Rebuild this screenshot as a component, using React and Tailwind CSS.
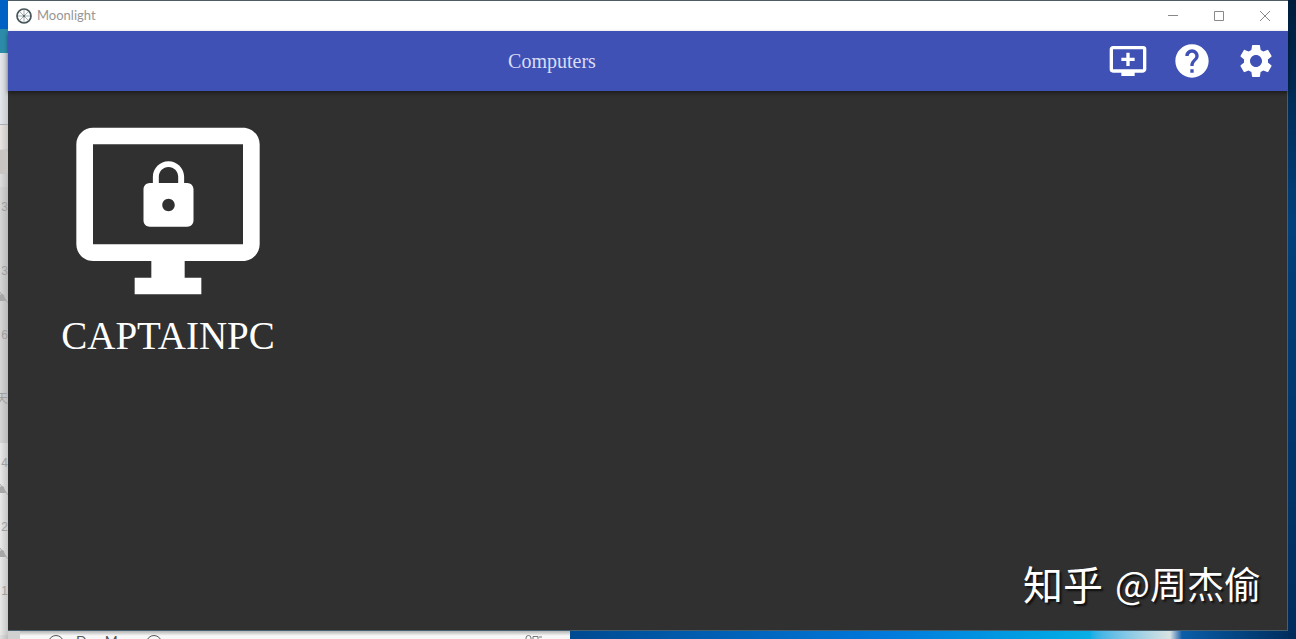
import clsx from 'clsx';
import { MdAddToQueue, MdHelp, MdLock, MdSettings } from 'react-icons/md';

const chatRows = [
  { id: 1, label: '3' },
  { id: 2, label: '3', muted: true },
  { id: 3, label: '6' },
  { id: 4, label: '天' },
  { id: 5, label: '4', muted: true, light: true },
  { id: 6, label: '2', muted: true, light: true },
  { id: 7, label: '1', light: true },
];

const toolbarActions = [
  { name: 'Add PC', icon: MdAddToQueue },
  { name: 'Help', icon: MdHelp },
  { name: 'Settings', icon: MdSettings },
];

const MoonlightLogo = () => (
  <svg viewBox="0 0 16 16" className="size-4" fill="none" aria-hidden="true">
    <circle cx="8" cy="8" r="7" stroke="#46545b" strokeWidth="1.7" />
    <path
      d="M8 2v12M2 8h12M3.8 3.8l8.4 8.4M12.2 3.8l-8.4 8.4"
      stroke="#8b979c"
      strokeWidth="0.8"
    />
    <circle cx="8" cy="8" r="1.2" fill="#5c6a70" />
  </svg>
);

const MonitorIcon = () => (
  <svg viewBox="0 0 24 24" className="size-[200px]" fill="currentColor" aria-hidden="true">
    <path d="M21 2H3c-1.1 0-2 .9-2 2v12c0 1.1.9 2 2 2h7v2H8v2h8v-2h-2v-2h7c1.1 0 2-.9 2-2V4c0-1.1-.9-2-2-2zm0 14H3V4h18v12z" />
  </svg>
);

const MutedBell = () => (
  <svg viewBox="0 0 12 12" className="size-3 shrink-0" fill="none" aria-hidden="true">
    <path d="M0 10l3-2 1-4a3 3 0 0 1 4 0l1 4 1 2z" fill="#a8a8a8" />
    <path d="M4 1l8 11" stroke="#a8a8a8" />
  </svg>
);

// Sliver of the chat window that sits behind the left edge
const ChatEdge = () => (
  <div className="flex w-2 shrink-0 flex-col overflow-hidden bg-linear-to-r from-[#dedede] to-[#bdbdbd]">
    <div className="h-[29px] shrink-0 bg-[#0061c5]" />
    <div className="h-6 shrink-0 bg-[#2b8ba8]" />
    <div className="h-[72px] shrink-0 border-b border-[#aaadb3] bg-linear-to-r from-[#e4e7ec] to-[#c5c8cc]" />
    <div className="h-6 shrink-0 bg-linear-to-r from-[#ebe6e3] to-[#c9c5c2]" />
    <div className="my-px h-6 shrink-0 rounded-r-sm bg-[#c8c5c3]" />
    <div className="flex flex-col pt-3">
      {chatRows.map((row) => (
        <div
          key={row.id}
          className={clsx(
            'flex h-16 shrink-0 flex-col items-end pt-3',
            row.light
              ? 'bg-linear-to-r from-[#e9e9e9] to-[#c6c6c6]'
              : 'bg-linear-to-r from-[#d6d6d6] to-[#b9b9b9]',
          )}
        >
          <span className="font-['Liberation_Sans','Noto_Sans_CJK_SC',sans-serif] text-xs leading-4 text-[#a0a0a0]">
            {row.label}
          </span>
          {row.muted && (
            <div className="mt-3">
              <MutedBell />
            </div>
          )}
        </div>
      ))}
    </div>
  </div>
);

const TitleBar = () => (
  <header className="flex h-[30px] shrink-0 items-center bg-white pl-2">
    <MoonlightLogo />
    <span className="ml-[5px] flex-1 font-[Lato,sans-serif] text-[13px] text-[#969696]">Moonlight</span>
    <div className="flex text-[#888888]">
      <button type="button" aria-label="Minimize" className="flex h-[30px] w-[46px] items-center justify-center">
        <svg viewBox="0 0 10 10" className="size-[10px]" stroke="currentColor" fill="none">
          <path d="M0 4.5h10" />
        </svg>
      </button>
      <button type="button" aria-label="Maximize" className="flex h-[30px] w-[46px] items-center justify-center">
        <svg viewBox="0 0 10 10" className="size-[10px]" stroke="currentColor" fill="none">
          <path d="M.5.5h9v9h-9z" />
        </svg>
      </button>
      <button type="button" aria-label="Close" className="flex h-[30px] w-[46px] items-center justify-center">
        <svg viewBox="0 0 10 10" className="size-[10px]" stroke="currentColor" fill="none">
          <path d="M0 0l10 10M10 0L0 10" />
        </svg>
      </button>
    </div>
  </header>
);

const Toolbar = () => (
  <div className="z-10 flex h-[60px] shrink-0 items-center bg-[#3f51b5] shadow-[0_2px_4px_rgba(0,0,0,0.45)]">
    <h1 className="flex-1 text-center font-['Liberation_Serif',serif] text-xl text-[#d9ddf5]">Computers</h1>
    <nav className="flex gap-6 px-3">
      {toolbarActions.map(({ name, icon: Icon }) => (
        <button key={name} type="button" aria-label={name} className="text-white">
          <Icon className="size-10" />
        </button>
      ))}
    </nav>
  </div>
);

const ComputerTile = ({ name }) => (
  <button type="button" className="flex w-[300px] flex-col items-center text-white">
    <span className="relative">
      <MonitorIcon />
      <MdLock className="absolute inset-x-0 top-[47px] mx-auto size-[75px]" />
    </span>
    <span className="font-['Liberation_Serif',serif] text-[39px] leading-[50px]">{name}</span>
  </button>
);

// Strip of desktop and browser left visible under the window
const DesktopEdge = () => (
  <div className="flex h-2 shrink-0 overflow-hidden">
    <div className="w-3 shrink-0 bg-[#d0d0d0]" />
    <div className="flex w-[550px] shrink-0 items-start bg-linear-to-b from-[#b5b5b5] to-[#f8f8f8] to-60% pt-1 pr-7 pl-7 font-[Lato,sans-serif] text-sm text-[#555555]">
      <span className="size-4 shrink-0 rounded-full border border-[#555555]" />
      <span className="ml-3 leading-3">Dan Mu</span>
      <span className="ml-5 size-4 shrink-0 rounded-full border border-[#555555]" />
      <svg viewBox="0 0 18 12" className="ml-auto h-3 w-[18px] shrink-0" fill="none" stroke="#777777" aria-hidden="true">
        <path d="M2 6V3a2.5 2.5 0 0 1 5 0v3M9 8V1.5h5V8M15 2h3" />
      </svg>
    </div>
    <div className="flex-1 bg-linear-to-r from-[#004a91] via-[#0078dc] via-60% to-[#08aee5]" />
    <div className="w-20 shrink-0 bg-linear-to-r from-[#08aee5] to-[#d9e3e2]" />
    <div className="w-[118px] shrink-0 bg-linear-to-r from-[#d9e3e2] via-[#0a5ea8] via-10% to-[#002f61]" />
  </div>
);

const App = () => (
  <div className="flex min-h-screen bg-[#4d5b64]">
    <ChatEdge />
    <div className="flex min-w-0 flex-1 flex-col pt-px">
      <TitleBar />
      <Toolbar />
      <main className="flex flex-1 flex-col justify-between border-r border-b border-[#476070] bg-[#303030]">
        <div className="flex flex-wrap pt-5 pl-[10px]">
          <ComputerTile name="CAPTAINPC" />
        </div>
        <p className="flex items-center gap-3 self-end pr-[26px] pb-5 font-['Noto_Sans_CJK_SC',sans-serif] text-[37px] leading-[54px] text-white [text-shadow:2px_2px_2px_rgba(0,0,0,0.7)]">
          <span className="text-[40px]">知乎</span>
          <span>@周杰偷</span>
        </p>
      </main>
      <DesktopEdge />
    </div>
    <div className="w-2 shrink-0 bg-linear-to-b from-[#001d3c] via-[#00407c] via-35% to-[#002c5c]" />
  </div>
);

export default App;
